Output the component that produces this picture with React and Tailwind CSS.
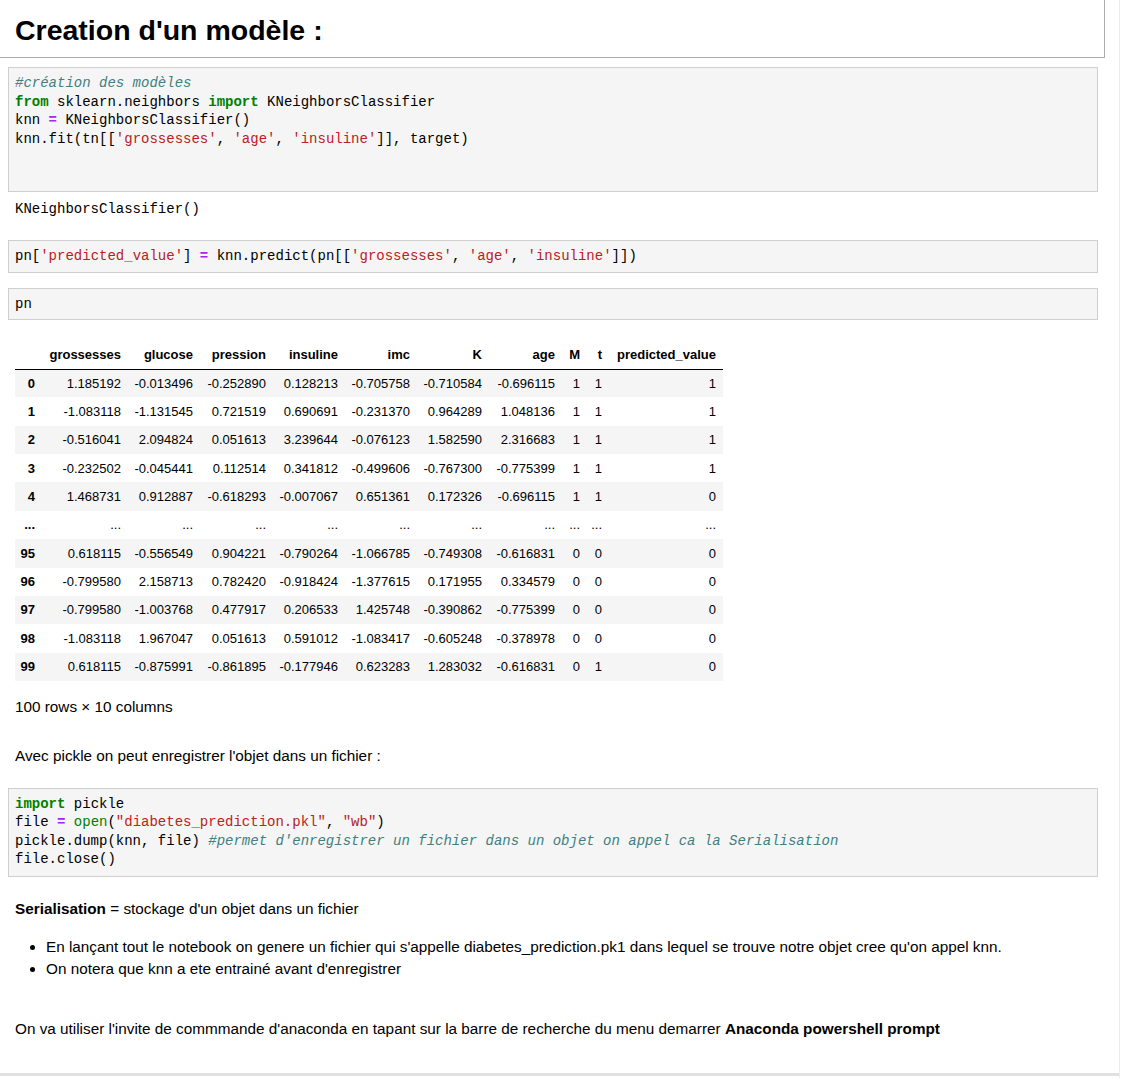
import React from 'react';

const mono = { fontFamily: '"Liberation Mono", "DejaVu Sans Mono", monospace' };

// syntax colours, roughly the Jupyter classic theme
const Kw = ({ children }) => <span className="font-bold text-[#008000]">{children}</span>;
const Op = ({ children }) => <span className="font-bold text-[#aa22ff]">{children}</span>;
const Str = ({ children }) => <span className="text-[#ba2121]">{children}</span>;
const Bi = ({ children }) => <span className="text-[#008000]">{children}</span>;
const Cm = ({ children }) => <span className="italic text-[#408080]">{children}</span>;

const columns = [
  { key: 'idx', label: '', w: 'w-[28px]' },
  { key: 'grossesses', label: 'grossesses', w: 'w-[85px]' },
  { key: 'glucose', label: 'glucose', w: 'w-[72px]' },
  { key: 'pression', label: 'pression', w: 'w-[73px]' },
  { key: 'insuline', label: 'insuline', w: 'w-[72px]' },
  { key: 'imc', label: 'imc', w: 'w-[72px]' },
  { key: 'K', label: 'K', w: 'w-[72px]' },
  { key: 'age', label: 'age', w: 'w-[73px]' },
  { key: 'M', label: 'M', w: 'w-[25px]' },
  { key: 't', label: 't', w: 'w-[22px]' },
  { key: 'pv', label: 'predicted_value', w: 'w-[114px]' }
];

const rows = [
  ['0', '1.185192', '-0.013496', '-0.252890', '0.128213', '-0.705758', '-0.710584', '-0.696115', '1', '1', '1'],
  ['1', '-1.083118', '-1.131545', '0.721519', '0.690691', '-0.231370', '0.964289', '1.048136', '1', '1', '1'],
  ['2', '-0.516041', '2.094824', '0.051613', '3.239644', '-0.076123', '1.582590', '2.316683', '1', '1', '1'],
  ['3', '-0.232502', '-0.045441', '0.112514', '0.341812', '-0.499606', '-0.767300', '-0.775399', '1', '1', '1'],
  ['4', '1.468731', '0.912887', '-0.618293', '-0.007067', '0.651361', '0.172326', '-0.696115', '1', '1', '0'],
  ['...', '...', '...', '...', '...', '...', '...', '...', '...', '...', '...'],
  ['95', '0.618115', '-0.556549', '0.904221', '-0.790264', '-1.066785', '-0.749308', '-0.616831', '0', '0', '0'],
  ['96', '-0.799580', '2.158713', '0.782420', '-0.918424', '-1.377615', '0.171955', '0.334579', '0', '0', '0'],
  ['97', '-0.799580', '-1.003768', '0.477917', '0.206533', '1.425748', '-0.390862', '-0.775399', '0', '0', '0'],
  ['98', '-1.083118', '1.967047', '0.051613', '0.591012', '-1.083417', '-0.605248', '-0.378978', '0', '0', '0'],
  ['99', '0.618115', '-0.875991', '-0.861895', '-0.177946', '0.623283', '1.283032', '-0.616831', '0', '1', '0']
];

function CodeCell({ className = '', children }) {
  return (
    <div
      className={`ml-[8px] w-[1090px] border border-[#cfcfcf] bg-[#f5f5f5] px-[6px] pt-[6px] text-[14px] leading-[18.5px] text-black whitespace-pre ${className}`}
      style={mono}
    >
      {children}
    </div>
  );
}

function DataFrame() {
  return (
    <table className="ml-[15px] mt-[20px] w-[708px] self-start table-fixed border-collapse text-[13px] text-black">
      <thead>
        <tr className="h-[29px] border-b border-black">
          {columns.map(c => (
            <th key={c.key} className={`${c.w} pr-[7px] text-right font-bold align-middle whitespace-nowrap`}>{c.label}</th>
          ))}
        </tr>
      </thead>
      <tbody>
        {rows.map((r, i) => (
          <tr key={i} className={`h-[28.36px] ${i % 2 === 0 ? 'bg-[#f5f5f5]' : 'bg-white'}`}>
            {r.map((v, j) => (
              j === 0 ? (
                <th key={j} className="pr-[8px] text-right font-bold align-middle">{v}</th>
              ) : (
                <td key={j} className="pr-[7px] text-right align-middle whitespace-nowrap">{v}</td>
              )
            ))}
          </tr>
        ))}
      </tbody>
    </table>
  );
}

export default function App() {
  return (
    <div
      className="flex w-[1122px] h-[1078px] overflow-hidden bg-white text-black"
      style={{ fontFamily: '"Liberation Sans", Arial, sans-serif' }}
    >
      <div className="w-[1120px] shrink-0 border-r border-[#ececec] flex flex-col">
        {/* Markdown title cell */}
        <div className="h-[58px] w-[1105px] border-r border-b border-[#ababab] flex items-center px-[15px] pt-[3px]">
          <h2 className="text-[28.5px] font-bold leading-none">Creation d'un modèle :</h2>
        </div>

        <CodeCell className="mt-[9px] h-[125px]">
          <Cm>#création des modèles</Cm>{'\n'}
          <Kw>from</Kw> sklearn.neighbors <Kw>import</Kw> KNeighborsClassifier{'\n'}
          knn <Op>=</Op> KNeighborsClassifier(){'\n'}
          knn.fit(tn[[<Str>'grossesses'</Str>, <Str>'age'</Str>, <Str>'insuline'</Str>]], target)
        </CodeCell>

        <div className="mt-[8px] px-[15px] text-[14px] leading-[18.5px]" style={mono}>KNeighborsClassifier()</div>

        <CodeCell className="mt-[21.5px] h-[33px]">
          pn[<Str>'predicted_value'</Str>] <Op>=</Op> knn.predict(pn[[<Str>'grossesses'</Str>, <Str>'age'</Str>, <Str>'insuline'</Str>]])
        </CodeCell>

        <CodeCell className="mt-[15px] h-[32px]">pn</CodeCell>

        <DataFrame />

        <p className="mt-[16px] px-[15px] text-[15.3px] leading-[20px]">100 rows × 10 columns</p>

        <p className="mt-[29px] px-[15px] text-[15.3px] leading-[20px]">Avec pickle on peut enregistrer l'objet dans un fichier :</p>

        <CodeCell className="mt-[22px] h-[89px]">
          <Kw>import</Kw> pickle{'\n'}
          file <Op>=</Op> <Bi>open</Bi>(<Str>"diabetes_prediction.pkl"</Str>, <Str>"wb"</Str>){'\n'}
          pickle.dump(knn, file) <Cm>#permet d'enregistrer un fichier dans un objet on appel ca la Serialisation</Cm>{'\n'}
          file.close()
        </CodeCell>

        <p className="mt-[22px] px-[15px] text-[15.3px] leading-[20px]">
          <b>Serialisation</b> = stockage d'un objet dans un fichier
        </p>

        <ul className="mt-[17px] pl-[46px] list-disc text-[15.3px] leading-[22px]">
          <li>En lançant tout le notebook on genere un fichier qui s'appelle diabetes_prediction.pk1 dans lequel se trouve notre objet cree qu'on appel knn.</li>
          <li>On notera que knn a ete entrainé avant d'enregistrer</li>
        </ul>

        <p className="mt-[39px] px-[15px] text-[15.3px] leading-[20px]">
          On va utiliser l'invite de commmande d'anaconda en tapant sur la barre de recherche du menu demarrer <b>Anaconda powershell prompt</b>
        </p>

        <div className="mt-[34px] h-[3px] w-full bg-[#e0e0e0]" />
      </div>
    </div>
  );
}
